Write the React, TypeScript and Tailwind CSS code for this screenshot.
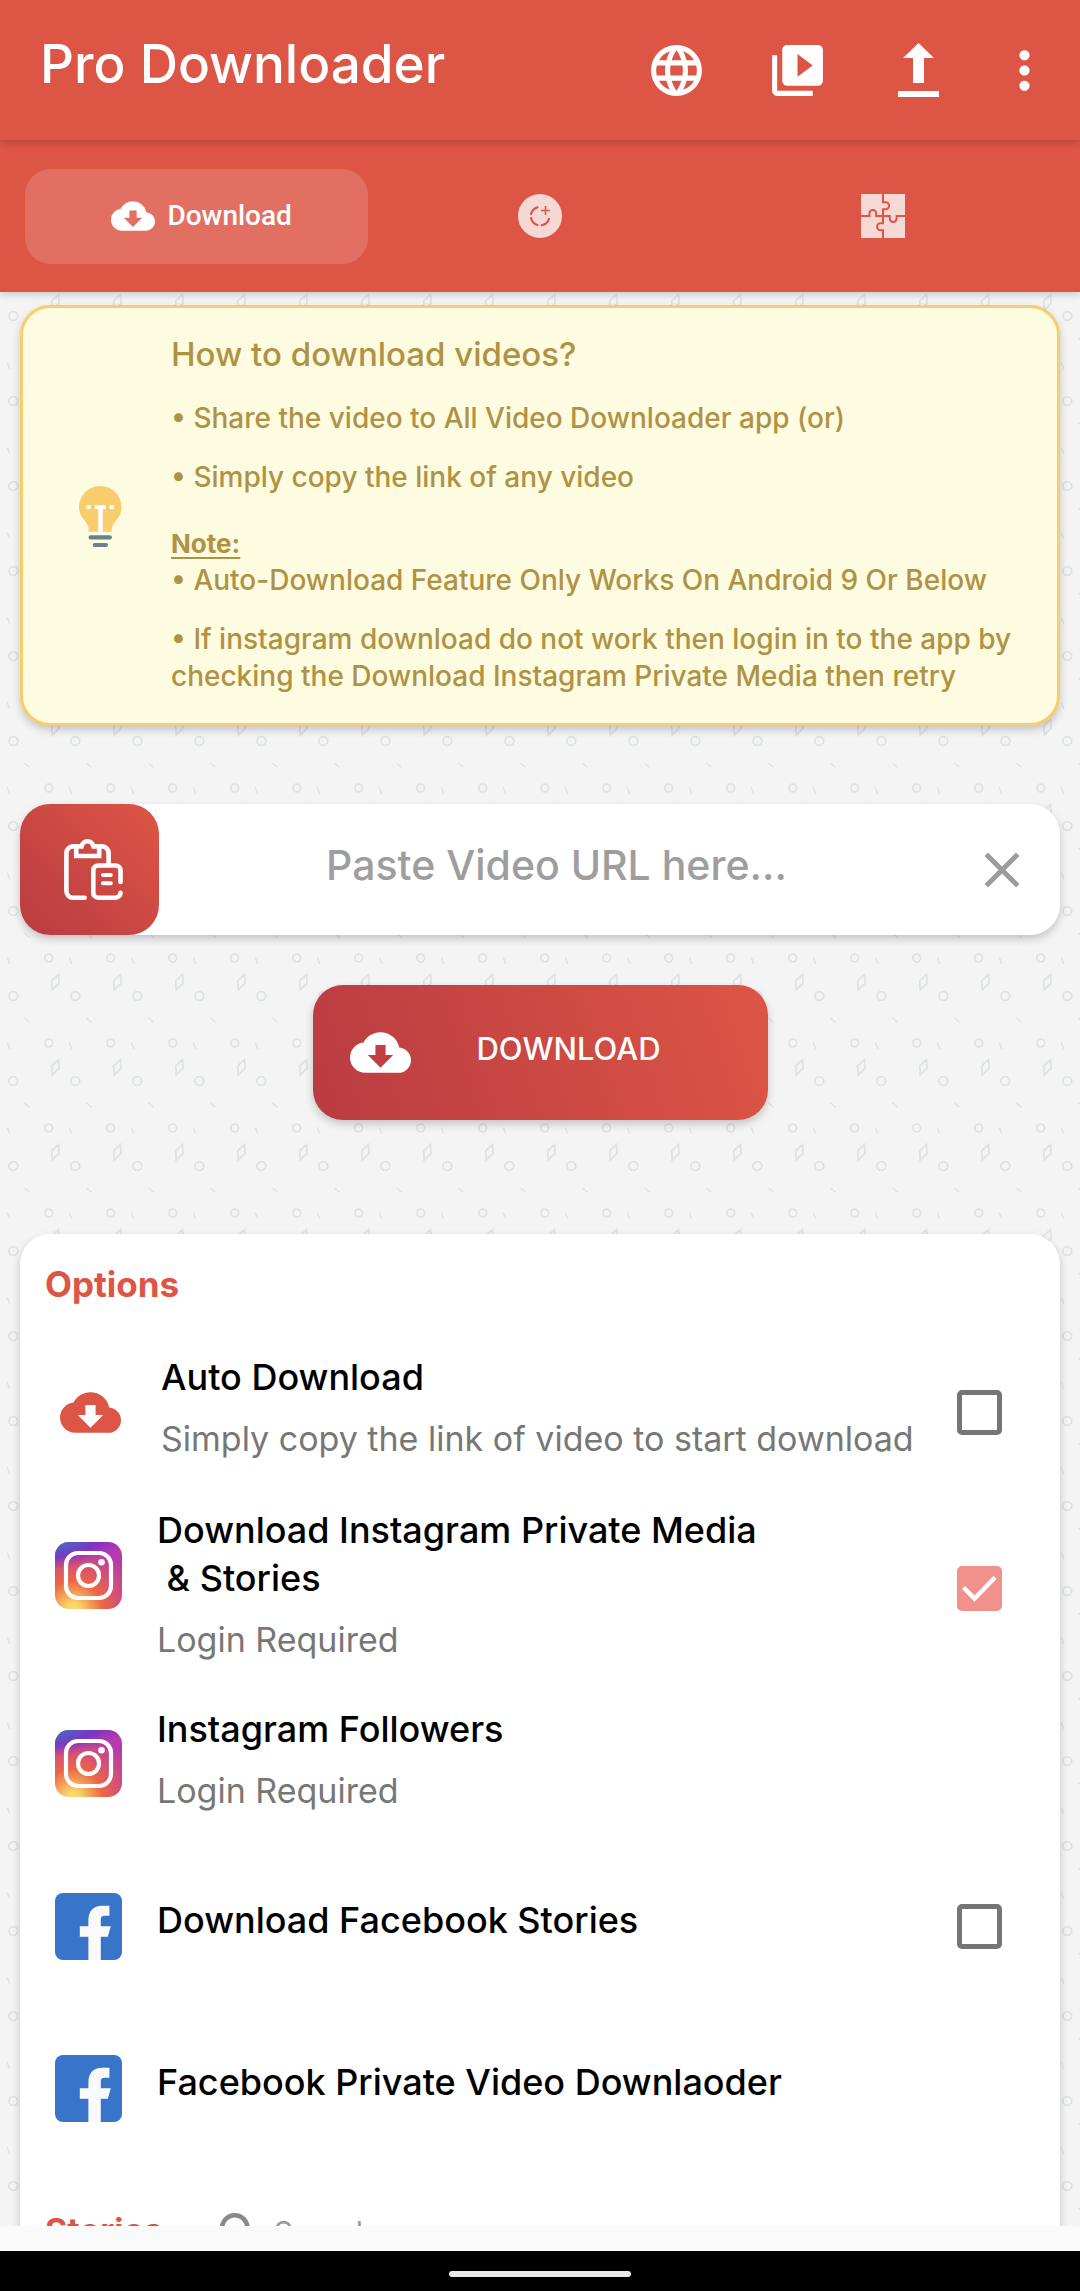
import { useState } from 'react';
import type { ReactNode } from 'react';
import { MdClose, MdCloudDownload, MdLanguage, MdMoreVert, MdSearch, MdVideoLibrary } from 'react-icons/md';

function UploadIcon() {
  return (
    <svg viewBox="0 0 61 61" className="size-[61px]" fill="currentColor" aria-hidden="true">
      <path d="M30.5 3 46 18H36v25H25V18H15zM10 51h41v6H10z" />
    </svg>
  );
}

function StatusIcon() {
  return (
    <svg viewBox="0 0 44 44" className="size-11" aria-hidden="true">
      <circle cx="22" cy="22" r="22" fill="#f6d8d5" />
      <g fill="none" stroke="#dd5544" strokeWidth="2.2" strokeLinecap="round">
        <path d="M13 20A9.500 9.500 0 0 1 19.500 13.400" />
        <path d="M13 24A9.500 9.500 0 0 0 19.500 31" />
        <path d="M23.800 31.200A9.500 9.500 0 0 0 31 24.800" />
        <path d="M27.500 12v9M23 16.500h9" strokeWidth="1.600" strokeLinecap="butt" />
      </g>
    </svg>
  );
}

function PuzzleIcon() {
  return (
    <svg viewBox="0 0 44 44" className="size-11" aria-hidden="true">
      <path d="M0 0h44v44H0z" fill="#f6d8d5" />
      <g fill="none" stroke="#dd5544" strokeWidth="2">
        <path d="M22 0v8.3h2.6a3.5 3.5 0 0 1 0 7H22v13.9h-2.4a3.5 3.5 0 0 0 0 7H22V44" />
        <path d="M0 22h8.4v-2.6a3.4 3.4 0 0 1 6.8 0V22h13.6v2.6a3.4 3.4 0 0 0 6.8 0V22H44" />
      </g>
    </svg>
  );
}

function BulbIcon() {
  return (
    <svg viewBox="0 0 43 61" className="mt-2 h-[61px] w-[43px] shrink-0" aria-hidden="true">
      <path d="M21.3 0a21 21 0 0 1 21.2 21c0 6-2.500 10.500-5.700 14-2.700 3-4.100 5.500-4.100 8v2.700H9.600V43c0-2.500-1-5-3.700-8C2.700 31.500 0 27 0 21A21 21 0 0 1 21.300 0z" fill="#f8cd6e" />
      <path d="M15.800 19.300h11.100V23h-3.100v22.700h-4.500V23h-3.500zM7.600 19.300h4.100V23H7.600zM30.600 19.300h4.200V23h-4.200z" fill="#fff" />
      <rect x="9.600" y="49.200" width="23.300" height="4.300" rx="2" fill="#6a818b" />
      <rect x="13.700" y="57" width="15.300" height="4" rx="2" fill="#6a818b" />
    </svg>
  );
}

function ClipboardIcon() {
  return (
    <svg viewBox="0 0 59 61" className="h-[61px] w-[59px]" fill="none" stroke="currentColor" strokeWidth="4.600" strokeLinecap="round" aria-hidden="true">
      <path d="M20.600 58.700H9a6.600 6.600 0 0 1-6.600-6.600V14A6.600 6.600 0 0 1 9 7.400h8.500c1-3.400 3-5.100 6-5.100s5 1.700 6 5.100H38A6.600 6.600 0 0 1 44.600 14v11" />
      <path d="M12.200 8.500V17h23V8.500" strokeLinecap="butt" />
      <path d="M56.500 43V31.500a5 5 0 0 0-5-5H34.300a5 5 0 0 0-5 5v22.200a5 5 0 0 0 5 5h17.200a5 5 0 0 0 5-5" />
      <path d="M39 36h7.800M39 44.300h7.800" strokeWidth="4" />
    </svg>
  );
}

function InstagramIcon() {
  return (
    <svg viewBox="0 0 67 67" className="size-[67px]" aria-hidden="true">
      <defs>
        <radialGradient id="ig-warm" cx="0.270" cy="1.020" r="0.990">
          <stop offset="0" stopColor="#fbe070" />
          <stop offset="0.100" stopColor="#f9d668" />
          <stop offset="0.450" stopColor="#ee6446" />
          <stop offset="1" stopColor="#b63aac" />
        </radialGradient>
        <radialGradient id="ig-cool" cx="0" cy="0" r="1" gradientTransform="translate(-0.100 0) rotate(-8) scale(1.350 0.420)">
          <stop offset="0" stopColor="#3a72c9" />
          <stop offset="0.130" stopColor="#3f70c9" />
          <stop offset="0.600" stopColor="#6a35c8" stopOpacity="0.800" />
          <stop offset="1" stopColor="#8a30c8" stopOpacity="0" />
        </radialGradient>
      </defs>
      <rect width="67" height="67" rx="14" fill="url(#ig-warm)" />
      <rect width="67" height="67" rx="14" fill="url(#ig-cool)" />
      <g fill="none" stroke="#fff" strokeWidth="4.200">
        <rect x="11" y="11" width="45" height="45" rx="12" />
        <circle cx="33.500" cy="33.500" r="10.500" />
      </g>
      <circle cx="46.500" cy="20.300" r="3.300" fill="#fff" />
    </svg>
  );
}

function FacebookIcon() {
  return (
    <svg viewBox="0 0 67 67" className="size-[67px]" aria-hidden="true">
      <rect width="67" height="67" rx="8" fill="#3874ca" />
      <path d="M33.400 67V43.700h-8.600V33.300h8.600V27c0-9 5.100-14.300 13.600-14.300h7.400v10h-5c-2.600 0-3.600 1.200-3.600 3.600v7h10l-3 10.400h-7V67z" fill="#fafafa" />
    </svg>
  );
}

function Backdrop() {
  return (
    <svg className="pointer-events-none absolute inset-0 size-full" aria-hidden="true">
      <defs>
        <pattern id="confetti" width="62" height="85" patternUnits="userSpaceOnUse">
          <g fill="none" stroke="#dde3e4" strokeWidth="1.800">
            <circle cx="13.300" cy="24" r="4.400" />
            <circle cx="48.700" cy="71" r="3.900" />
            <path d="M51.700 8.900 58.500 2.700l.6 8.600-6.900 6.600z" />
            <path d="M24.500 46l5 4.200M7.300 70.500l2.500 6.500" strokeWidth="1.400" />
          </g>
        </pattern>
      </defs>
      <rect width="100%" height="100%" fill="url(#confetti)" />
    </svg>
  );
}

function CheckBox({ id, defaultChecked = false }: { id: string; defaultChecked?: boolean }) {
  return (
    <span className="grid shrink-0">
      <input
        id={id}
        type="checkbox"
        defaultChecked={defaultChecked}
        className="peer col-start-1 row-start-1 size-[45px] appearance-none rounded-[5px] border-[5px] border-[#757575] checked:border-[#f0918c] checked:bg-[#f0918c]"
      />
      <svg
        viewBox="0 0 45 45"
        className="pointer-events-none invisible col-start-1 row-start-1 size-[45px] peer-checked:visible"
        fill="none"
        stroke="#fff"
        strokeWidth="4.500"
        aria-hidden="true"
      >
        <path d="M6.500 21.500 17.500 32.500 38 11.500" />
      </svg>
    </span>
  );
}

type OptionProps = {
  id: string;
  icon: ReactNode;
  title: string;
  note?: string;
  check?: 'on' | 'off';
  rowClass?: string;
  iconClass?: string;
  textClass: string;
};

function Option({ id, icon, title, note, check, rowClass = '', iconClass = '', textClass }: OptionProps) {
  const heading = 'block whitespace-pre-line text-4xl leading-[48px] font-medium text-black';
  return (
    <li className={`flex items-center gap-[35px] ${rowClass}`}>
      <span className={`flex w-[67px] shrink-0 justify-center ${iconClass}`}>{icon}</span>
      <span className={`flex-1 ${textClass}`}>
        {check ? (
          <label htmlFor={id} className={heading}>{title}</label>
        ) : (
          <a href={`#${id}`} className={heading}>{title}</a>
        )}
        {note && <span className="mt-3.5 block text-[34px] leading-[48px] text-[#777]">{note}</span>}
      </span>
      {check && <CheckBox id={id} defaultChecked={check === 'on'} />}
    </li>
  );
}

export default function App() {
  const [url, setUrl] = useState('');

  return (
    <div className="flex h-screen flex-col bg-[#fafafa] font-['Inter',sans-serif]">
      <header className="relative z-20 flex h-[140px] shrink-0 items-center bg-[#dd5544] pr-[25px] pl-10 text-white shadow-[0_2px_8px_rgba(0,0,0,0.2)]">
        <h1 className="flex-1 pb-3 text-[53px] leading-none font-medium">Pro Downloader</h1>
        <div className="flex gap-[60px]">
          <button type="button" aria-label="Browser"><MdLanguage className="size-[61px]" /></button>
          <button type="button" aria-label="Video library"><MdVideoLibrary className="size-[61px]" /></button>
          <button type="button" aria-label="Upload"><UploadIcon /></button>
        </div>
        <button type="button" aria-label="More options" className="ml-[45px]"><MdMoreVert className="size-[61px]" /></button>
      </header>

      <nav className="relative z-10 grid h-[152px] shrink-0 grid-cols-3 items-center bg-[#dd5544] px-[25px] shadow-[0_2px_8px_rgba(0,0,0,0.2)]">
        <button type="button" className="flex h-[95px] items-center justify-center gap-3 rounded-[26px] bg-[#e27062] pl-2.5 font-['Roboto',sans-serif] text-[28px] leading-none font-medium text-white">
          <MdCloudDownload className="size-11" />
          Download
        </button>
        <button type="button" aria-label="Status" className="flex h-[95px] items-center justify-center"><StatusIcon /></button>
        <button type="button" aria-label="Extensions" className="flex h-[95px] items-center justify-center"><PuzzleIcon /></button>
      </nav>

      <main className="relative min-h-0 flex-1 bg-[#f4f4f4]">
        <Backdrop />
        <div className="relative h-full overflow-x-hidden overflow-y-auto px-5 pt-[13px] [scrollbar-width:none]">
          <section className="flex items-center gap-[49px] rounded-[30px] border-[3px] border-[#f8cd6e] bg-[#fdfbe0] pt-[22px] pr-8 pb-7 pl-14 text-[28px] leading-[37px] font-medium text-[#b09244] shadow-[0_4px_8px_rgba(0,0,0,0.2)]">
            <BulbIcon />
            <div className="flex-1">
              <h2 className="text-[33px] leading-[48px]">How to download videos?</h2>
              <p className="mt-[22px]">• Share the video to All Video Downloader app (or)</p>
              <p className="mt-[22px]">• Simply copy the link of any video</p>
              <p className="mt-[29px] text-[26px] font-bold underline decoration-2 underline-offset-4">Note:</p>
              <p>• Auto-Download Feature Only Works On Android 9 Or Below</p>
              <p className="mt-[22px]">• If instagram download do not work then login in to the app by checking the Download Instagram Private Media then retry</p>
            </div>
          </section>

          <form onSubmit={(event) => event.preventDefault()}>
            <div className="mt-[78px] flex h-[131px] rounded-[30px] bg-white shadow-[0_4px_8px_rgba(0,0,0,0.2)]">
              <button type="button" aria-label="Paste from clipboard" className="flex w-[139px] shrink-0 items-center justify-center rounded-[30px] bg-[linear-gradient(45deg,#b93c42,#dd5545)] pl-2 text-white">
                <ClipboardIcon />
              </button>
              <input
                type="url"
                aria-label="Video URL"
                placeholder="Paste Video URL here..."
                value={url}
                onChange={(event) => setUrl(event.target.value)}
                className="min-w-0 flex-1 bg-transparent pb-2 text-center text-[41px] font-medium text-[#444] outline-none placeholder:text-[#9e9e9e]"
              />
              <button type="button" aria-label="Clear" onClick={() => setUrl('')} className="mr-2.5 flex w-24 shrink-0 items-center justify-center text-[#9c9c9c]">
                <MdClose className="size-[60px]" />
              </button>
            </div>

            <button type="submit" className="mx-auto mt-[50px] flex h-[135px] w-[455px] items-center gap-[66px] rounded-[30px] bg-[linear-gradient(72deg,#b93c42,#dd5545)] pl-[37px] text-white shadow-[0_4px_8px_rgba(0,0,0,0.2)]">
              <MdCloudDownload className="size-[61px]" />
              <span className="pb-2 text-[31px] leading-none font-medium">DOWNLOAD</span>
            </button>
          </form>

          <section className="mt-[114px] rounded-t-[30px] bg-white pt-[26px] pb-16 shadow-[0_4px_8px_rgba(0,0,0,0.2)]">
            <h2 className="pl-[25px] text-[35px] leading-[48px] font-bold text-[#dd5544]">Options</h2>
            <ul className="mt-[45px] flex flex-col gap-[35px] pr-[58px] pl-[35px]">
              <Option
                id="auto-download"
                icon={<MdCloudDownload className="size-[61px] text-[#dd5544]" />}
                title="Auto Download"
                note="Simply copy the link of video to start download"
                check="off"
                iconClass="pl-1"
                textClass="pb-2 pl-1"
              />
              <Option
                id="instagram-private"
                icon={<InstagramIcon />}
                title={'Download Instagram Private Media\n\u00a0& Stories'}
                note="Login Required"
                check="on"
                iconClass="pb-[26px]"
                textClass="pb-1.5"
              />
              <Option
                id="instagram-followers"
                icon={<InstagramIcon />}
                title="Instagram Followers"
                note="Login Required"
                textClass="pb-1.5"
              />
              <Option
                id="facebook-stories"
                icon={<FacebookIcon />}
                title="Download Facebook Stories"
                check="off"
                rowClass="pt-[37px] pb-[30px]"
                textClass="pb-3.5"
              />
              <Option
                id="facebook-private"
                icon={<FacebookIcon />}
                title="Facebook Private Video Downlaoder"
                rowClass="py-[30px]"
                textClass="pb-3.5"
              />
            </ul>

            <div className="mt-[50px] flex items-center pl-[25px]">
              <h2 className="pb-0.5 text-[34px] leading-[48px] font-bold text-[#dd5544]">Stories</h2>
              <label htmlFor="story-search" className="ml-[50px] pt-1 text-[#8a8888]">
                <MdSearch className="size-[55px]" />
                <span className="sr-only">Search stories</span>
              </label>
              <input
                id="story-search"
                type="search"
                placeholder="Search"
                className="min-w-0 flex-1 bg-transparent pl-1.5 text-3xl text-[#444] outline-none placeholder:text-[#999]"
              />
            </div>
          </section>
        </div>
      </main>

      <footer className="shrink-0 pt-[25px]">
        <div className="flex h-10 items-end justify-center bg-black pb-3.5">
          <div className="h-1.5 w-[182px] rounded-full bg-[#e8e8e8]" />
        </div>
      </footer>
    </div>
  );
}
